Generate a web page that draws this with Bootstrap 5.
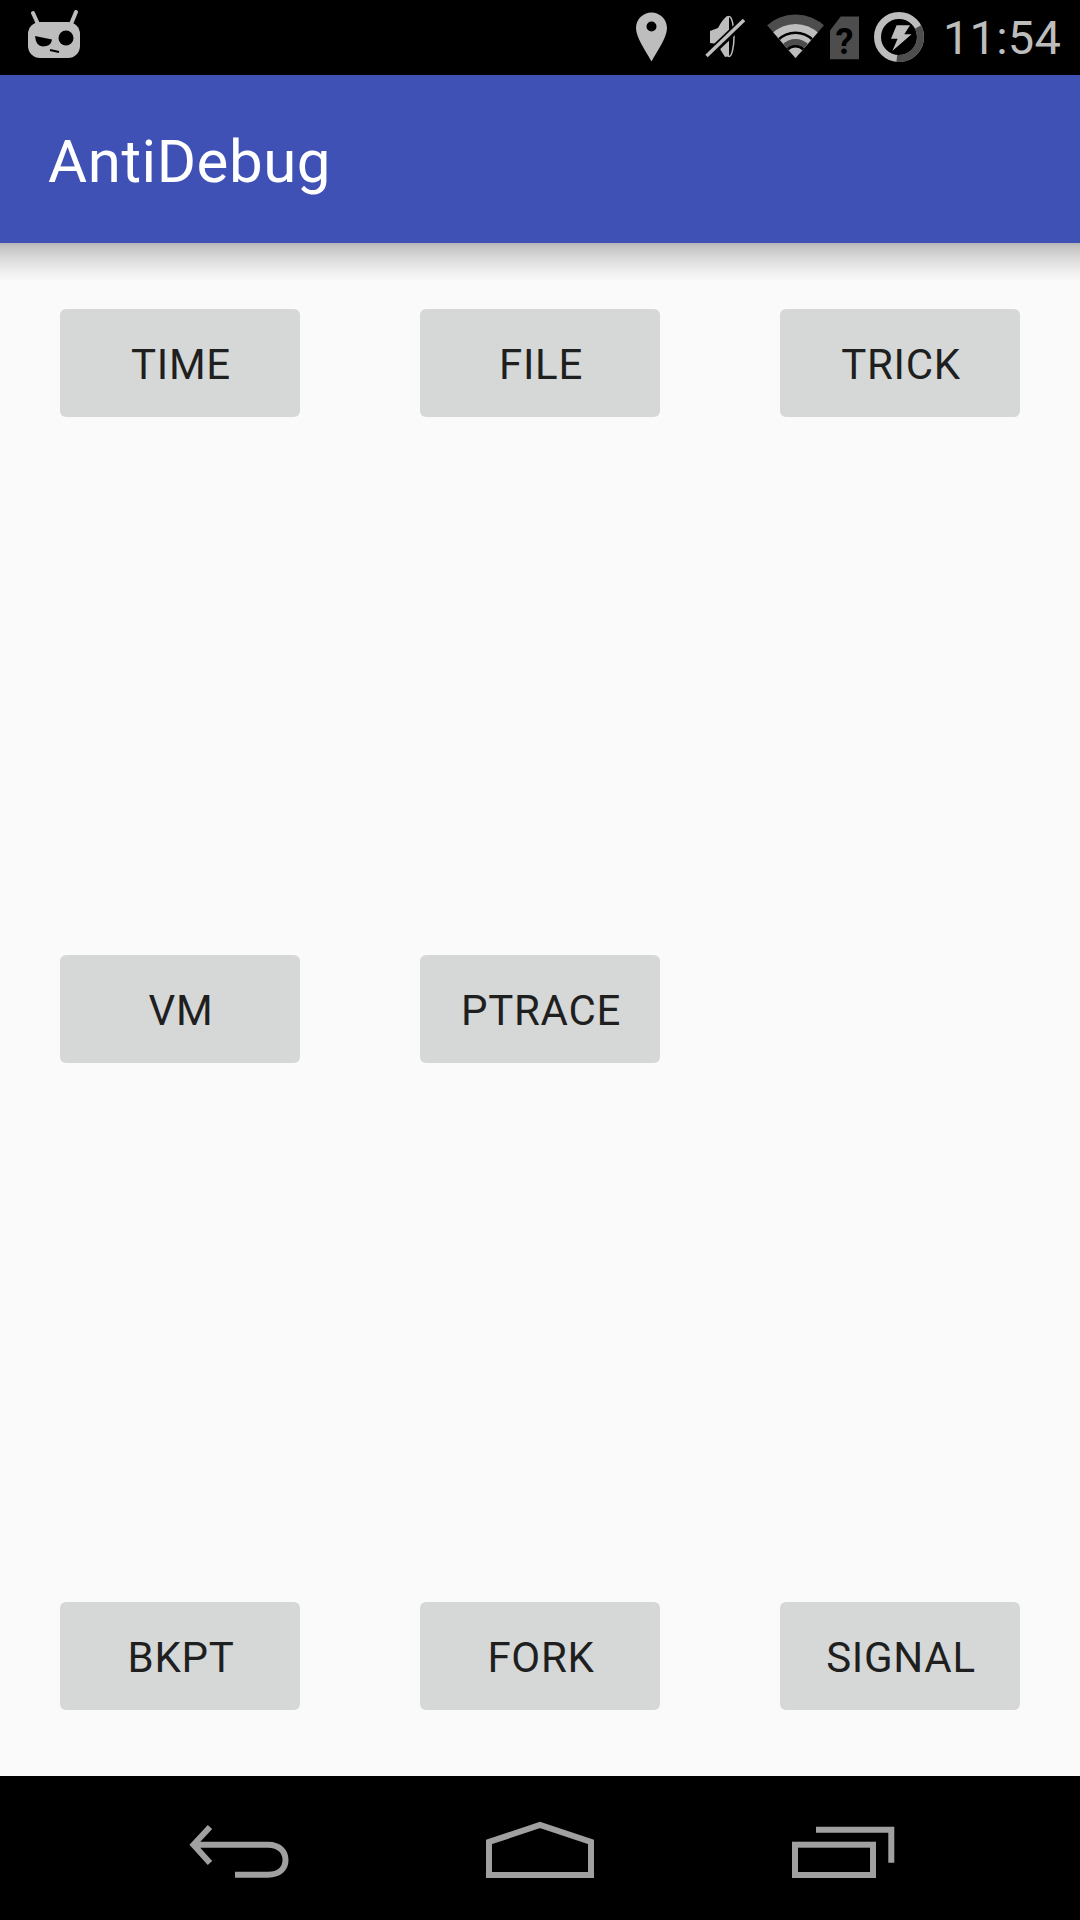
<!DOCTYPE html>
<html lang="en">
<head>
<meta charset="utf-8">
<title>AntiDebug</title>
<link href="https://cdn.jsdelivr.net/npm/bootstrap@5.3.0/dist/css/bootstrap.min.css" rel="stylesheet">
<style>
html, body { margin: 0; background: #fafafa; }
.phone { width: 1080px; height: 1920px; font-family: Roboto, "Liberation Sans", sans-serif; overflow: hidden; }
.status-row { height: 75px; background: #000; color: #bdbdbd; flex: none; }
.status-row svg { display: block; flex: none; }
.logo-icon { margin: 10px 0 0 28px; }
.pin-icon { margin: 12px 0 0 auto; }
.mute-icon { margin: 15px 0 0 37px; }
.wifi-icon { margin: 14px 0 0 21px; }
.sim-icon { margin: 15.5px 0 0 4px; }
.charge-icon { margin: 12px 0 0 13.7px; }
.clock-text { font-size: 47px; line-height: 75px; margin-left: 19.3px; margin-right: 19px; letter-spacing: .2px; }
.sim-mark { font: 700 36px Roboto, "Liberation Sans", sans-serif; fill: #000; }
.app-title { height: 168px; background: #3f51b5; color: #fff; font-size: 60px; letter-spacing: .55px; padding: 5px 0 0 48px; flex: none; }
.drop-shade { height: 39px; flex: none; background: linear-gradient(#b4b4b4 0, #c4c4c4 4px, #dcdcdc 16px, #f0f0f0 30px, #fafafa 39px); }
.button-area { flex: 1 1 auto; padding: 27px 60px 66px; background: #fafafa; }
.button-row { display: grid; grid-template-columns: repeat(3, 240px); column-gap: 120px; }
.button-row.middle-row { margin-bottom: 1px; }
.btn.droid-btn { height: 108px; padding: 4px 0 0 2px; background: #d6d7d7; color: #1f1f1f; border: 0; border-radius: 6px; font-size: 42px; line-height: 104px; letter-spacing: .7px; }
.softkeys { height: 144px; background: #000; flex: none; }
.softkeys svg { display: block; }
</style>
</head>
<body>
<div class="phone d-flex flex-column">
  <div class="status-row d-flex align-items-start">
    <svg class="logo-icon" width="54" height="50" viewBox="28 10 54 50">
      <path d="M33 13 L38 24 M76 12 L71 24" stroke="#bdbdbd" stroke-width="4" stroke-linecap="round" fill="none"/>
      <rect x="28" y="22" width="52" height="36" rx="12" fill="#bdbdbd"/>
      <path d="M35 36 L52 39.5 Q51 46.5 43 46.5 Q36 46.5 35 36Z" fill="#000"/>
      <circle cx="66" cy="38" r="7.5" fill="#000"/>
      <path d="M50 50 L59 52" stroke="#000" stroke-width="2" fill="none"/>
    </svg>
    <svg class="pin-icon" width="32" height="50" viewBox="636 12 32 50">
      <path fill-rule="evenodd" fill="#bdbdbd" d="M651.5 12.500C660 12.500 667 19.500 667 28C667 38 656 53 651.500 61.500C647 53 636 38 636 28C636 19.500 643 12.500 651.500 12.500ZM651.500 21.500A5 5 0 1 0 651.500 31.500A5 5 0 1 0 651.500 21.500Z"/>
    </svg>
    <svg class="mute-icon" width="40" height="44" viewBox="705 15 40 44">
      <path d="M710 31 L718 28 Q722 20 727 16 L729 17 L729 56 L725 57 Q720 50 718 44 L710 43Z" fill="#bdbdbd"/>
      <ellipse cx="729" cy="36.500" rx="5" ry="20" fill="none" stroke="#bdbdbd" stroke-width="1.500"/>
      <path d="M706 57 L745 20" stroke="#000" stroke-width="8" fill="none"/>
      <path d="M706.500 56 L744 20" stroke="#bdbdbd" stroke-width="3.500" fill="none"/>
    </svg>
    <svg class="wifi-icon" width="60" height="44" viewBox="766 14 60 44">
      <defs><clipPath id="wedge"><polygon points="795.500,58 752,8 839,8"/></clipPath></defs>
      <g clip-path="url(#wedge)">
        <circle cx="795.500" cy="57.500" r="43" fill="#4d4d4d"/>
        <circle cx="795.500" cy="57.500" r="33.500" fill="#bdbdbd"/>
        <circle cx="795.500" cy="57.500" r="26" fill="#000"/>
        <circle cx="795.500" cy="57.500" r="23.500" fill="#bdbdbd"/>
        <circle cx="795.500" cy="57.500" r="18.500" fill="#4d4d4d"/>
        <circle cx="795.500" cy="57.500" r="12.500" fill="#000"/>
        <circle cx="795.500" cy="57.500" r="10" fill="#bdbdbd"/>
      </g>
    </svg>
    <svg class="sim-icon" width="30" height="48" viewBox="830 15.500 30 48">
      <path d="M830 30 L840.700 16 H859 V58.700 H830Z" fill="#4d4d4d"/>
      <text class="sim-mark" x="844.500" y="53" text-anchor="middle">?</text>
    </svg>
    <svg class="charge-icon" width="50" height="50" viewBox="873.700 12 50 50">
      <circle cx="898.700" cy="37" r="21.500" fill="none" stroke="#bdbdbd" stroke-width="7"/>
      <path d="M917.700 27 A21.500 21.500 0 0 1 896.500 58.400" fill="none" stroke="#4d4d4d" stroke-width="7"/>
      <path d="M896.300 25.300 L909.700 25.300 L904 34.300 L911.300 34.300 L892 51 L897.300 38.700 L890.700 38.700Z" fill="#bdbdbd"/>
    </svg>
    <span class="clock-text">11:54</span>
  </div>
  <div class="app-title d-flex align-items-center">AntiDebug</div>
  <div class="drop-shade"></div>
  <div class="button-area d-flex flex-column justify-content-between">
    <div class="button-row">
      <button type="button" class="btn droid-btn">TIME</button>
      <button type="button" class="btn droid-btn">FILE</button>
      <button type="button" class="btn droid-btn">TRICK</button>
    </div>
    <div class="button-row middle-row">
      <button type="button" class="btn droid-btn">VM</button>
      <button type="button" class="btn droid-btn">PTRACE</button>
    </div>
    <div class="button-row">
      <button type="button" class="btn droid-btn">BKPT</button>
      <button type="button" class="btn droid-btn">FORK</button>
      <button type="button" class="btn droid-btn">SIGNAL</button>
    </div>
  </div>
  <div class="softkeys">
    <svg width="1080" height="144" viewBox="0 1776 1080 144" fill="none" stroke="#a0a0a0" stroke-width="6">
      <path d="M210 1827 L193.500 1844.700 L210 1863 M194 1844.700 H268 C280 1844.700 285.500 1852 285.500 1860 C285.500 1868 280 1874.700 268 1874.700 H235"/>
      <path d="M489 1875 V1842 L540 1825 L591 1842 V1875Z"/>
      <rect x="795" y="1844.700" width="78" height="30.300"/>
      <path d="M816 1829.700 H891.300 V1862.700"/>
    </svg>
  </div>
</div>
<script src="https://cdn.jsdelivr.net/npm/bootstrap@5.3.0/dist/js/bootstrap.bundle.min.js"></script>
</body>
</html>
